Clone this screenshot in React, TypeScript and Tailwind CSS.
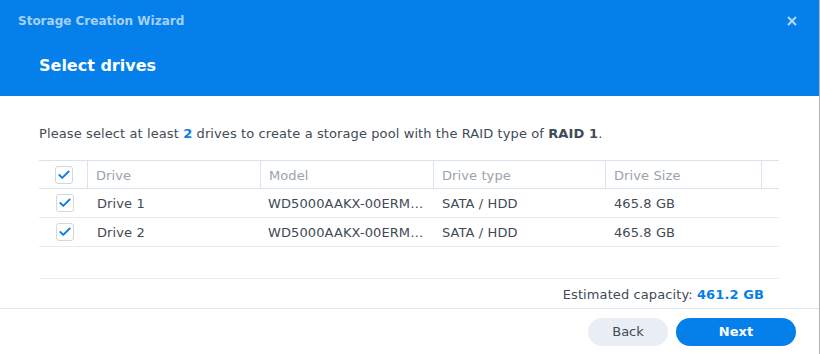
import { Check } from "lucide-react";

const DRIVES = [
  { name: "Drive 1", model: "WD5000AAKX-00ERMA0", type: "SATA / HDD", size: "465.8 GB" },
  { name: "Drive 2", model: "WD5000AAKX-00ERMA0", type: "SATA / HDD", size: "465.8 GB" },
];

function CheckBox() {
  return (
    <span className="flex h-[18px] w-[18px] items-center justify-center rounded-[3px] border border-[#cfd8e1] bg-white">
      <Check className="h-[14px] w-[14px] text-[#0a7ee6]" strokeWidth={3.2} />
    </span>
  );
}

export default function App() {
  return (
    <div className="flex h-[354px] w-[820px] flex-col overflow-hidden border-r border-[#b3b3b3] bg-white font-['DejaVu_Sans',sans-serif] text-[#414b55]">
      {/* Header */}
      <header className="h-[96px] shrink-0 bg-[#0580eb]">
        <div className="flex h-[40px] items-center justify-between pl-[18px] pr-[22px] pt-[1px]">
          <h1 className="text-[12px] font-bold text-[#a6d1f8]">Storage Creation Wizard</h1>
          <svg viewBox="0 0 10 10" className="h-[10px] w-[10px]" aria-hidden={true}>
            <path d="M1 1L9 9M9 1L1 9" stroke="#b5d9fa" strokeWidth="2" />
          </svg>
        </div>
        <h2 className="pl-[39px] pt-[14px] text-[16px] font-bold text-white">Select drives</h2>
      </header>

      {/* Body */}
      <section className="flex-1 px-[39px] pt-[29px] text-[13px] tracking-[0.1px]">
        <p className="leading-[18px]">
          Please select at least <b className="text-[#0a7ee6]">2</b> drives to create a storage pool with the RAID type of{" "}
          <b>RAID 1</b>.
        </p>

        <div className="mt-[17px] w-[740px]">
          <div className="flex h-[29px] items-center border-y border-[#d9e3ed] text-[#9aa3ab]">
            <div className="flex h-full w-[49px] items-center justify-center border-r border-[#dbe4ec] pl-[1px]">
              <CheckBox />
            </div>
            <div className="flex h-full w-[173px] items-center border-r border-[#dbe4ec] pl-[8px] pt-[2px]">Drive</div>
            <div className="flex h-full w-[173px] items-center border-r border-[#dbe4ec] pl-[8px] pt-[2px]">Model</div>
            <div className="flex h-full w-[172px] items-center border-r border-[#dbe4ec] pl-[8px] pt-[2px]">Drive type</div>
            <div className="flex h-full w-[156px] items-center border-r border-[#dbe4ec] pl-[8px] pt-[2px]">Drive Size</div>
          </div>
          {DRIVES.map((d) => (
            <div key={d.name} className="flex h-[29px] items-center border-b border-[#e6ebf0]">
              <div className="flex w-[49px] justify-center pl-[2px]">
                <CheckBox />
              </div>
              <div className="w-[173px] pl-[9px] pt-[2px]">{d.name}</div>
              <div className="w-[173px] truncate pl-[7px] pr-[10px] pt-[2px]">{d.model}</div>
              <div className="w-[172px] pl-[8px] pt-[2px]">{d.type}</div>
              <div className="w-[156px] pl-[8px] pt-[2px]">{d.size}</div>
            </div>
          ))}
        </div>

        <div className="mt-[31px] w-[740px] border-t border-[#eaecee] pr-[15px] pt-[7px] text-right leading-[18px]">
          Estimated capacity: <b className="text-[#0a7ee6]">461.2 GB</b>
        </div>
      </section>

      {/* Footer */}
      <footer className="flex h-[46px] shrink-0 items-center justify-end gap-[8px] border-t border-[#e0e6ec] pr-[23px] text-[13px]">
        <button className="h-[28px] w-[80px] rounded-full bg-[#e9eef4] text-[#414b55]">Back</button>
        <button className="h-[28px] w-[120px] rounded-full bg-[#0580eb] font-bold text-white">Next</button>
      </footer>
    </div>
  );
}
